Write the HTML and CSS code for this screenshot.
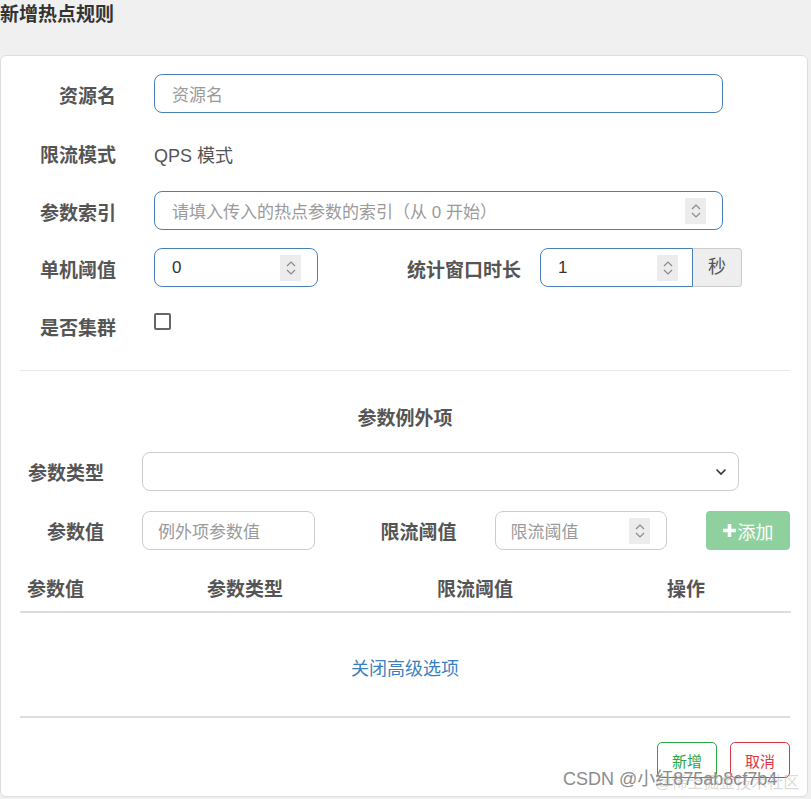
FILE: index.html
```html
<!DOCTYPE html>
<html lang="zh-CN">
<head>
    <meta charset="UTF-8">
    <title>新增热点规则</title>
    <link rel="stylesheet" href="styles.css">
</head>
<body>
    <h4 class="dialog-title">新增热点规则</h4>
    <div class="panel">
        <div class="form-row">
            <label class="control-label">资源名</label>
            <div class="input input-focus wide"><span class="placeholder">资源名</span></div>
        </div>
        <div class="form-row row-static">
            <label class="control-label">限流模式</label>
            <span class="static-text">QPS 模式</span>
        </div>
        <div class="form-row">
            <label class="control-label">参数索引</label>
            <div class="input input-focus wide">
                <span class="placeholder">请填入传入的热点参数的索引（从 0 开始）</span>
                <span class="spinner"><svg width="12" height="20" viewBox="0 0 12 20"><path d="M2 8 L6 4 L10 8 M2 12 L6 16 L10 12" fill="none" stroke="#8a8a8a" stroke-width="1.2"/></svg></span>
            </div>
        </div>
        <div class="form-row">
            <label class="control-label">单机阈值</label>
            <div class="input input-focus threshold">
                <span class="value">0</span>
                <span class="spinner"><svg width="12" height="20" viewBox="0 0 12 20"><path d="M2 8 L6 4 L10 8 M2 12 L6 16 L10 12" fill="none" stroke="#8a8a8a" stroke-width="1.2"/></svg></span>
            </div>
            <label class="control-label window-label">统计窗口时长</label>
            <div class="input-group">
                <div class="input input-focus group-input">
                    <span class="value">1</span>
                    <span class="spinner"><svg width="12" height="20" viewBox="0 0 12 20"><path d="M2 8 L6 4 L10 8 M2 12 L6 16 L10 12" fill="none" stroke="#8a8a8a" stroke-width="1.2"/></svg></span>
                </div>
                <span class="addon">秒</span>
            </div>
        </div>
        <div class="form-row row-check">
            <label class="control-label">是否集群</label>
            <span class="checkbox"></span>
        </div>

        <hr class="divider">

        <h5 class="section-title">参数例外项</h5>

        <div class="form-row small-label">
            <label class="control-label">参数类型</label>
            <div class="input select">
                <span class="value"></span>
                <svg width="12" height="8" viewBox="0 0 12 8"><path d="M1.5 1.5 L6 6 L10.5 1.5" fill="none" stroke="#333" stroke-width="1.6"/></svg>
            </div>
        </div>
        <div class="form-row small-label">
            <label class="control-label">参数值</label>
            <div class="input short"><span class="placeholder">例外项参数值</span></div>
            <label class="control-label limit-label">限流阈值</label>
            <div class="input short">
                <span class="placeholder">限流阈值</span>
                <span class="spinner"><svg width="12" height="20" viewBox="0 0 12 20"><path d="M2 8 L6 4 L10 8 M2 12 L6 16 L10 12" fill="none" stroke="#8a8a8a" stroke-width="1.2"/></svg></span>
            </div>
            <button class="btn-add"><svg width="13" height="13" viewBox="0 0 13 13"><path d="M6.5 0 V13 M0 6.5 H13" stroke="#fff" stroke-width="3.6"/></svg>添加</button>
        </div>

        <table class="items">
            <thead>
                <tr>
                    <th class="col-value">参数值</th>
                    <th class="col-type">参数类型</th>
                    <th class="col-limit">限流阈值</th>
                    <th>操作</th>
                </tr>
            </thead>
        </table>

        <div class="advanced"><a href="#">关闭高级选项</a></div>

        <hr class="divider-bold">

        <div class="footer">
            <button class="btn btn-ok">新增</button>
            <button class="btn btn-cancel">取消</button>
        </div>
    </div>

    <div class="watermark">CSDN @小红875ab8cf7b4</div>
    <div class="watermark watermark-faint">@稀土掘金技术社区</div>
</body>
</html>
```

FILE: styles.css
```css
body {
    margin: 0;
    background-color: #f0f0f0;
    font-family: "Liberation Sans", "Noto Sans CJK SC", sans-serif;
    color: #555;
    position: relative;
    height: 799px;
    overflow: hidden;
}
.dialog-title {
    margin: 0;
    font-size: 19px;
    line-height: 30px;
    font-weight: bold;
    color: #333;
}
.panel {
    margin: 25px 3px 0 0;
    background-color: #fff;
    border: 1px solid #ddd;
    border-radius: 6px;
    padding: 18px 17px 18px 19px;
}
.form-row {
    display: flex;
    align-items: flex-start;
    height: 39px;
    margin-bottom: 18px;
}
.control-label {
    flex: none;
    width: 96px;
    margin-right: 38px;
    padding-top: 10px;
    text-align: right;
    font-size: 19px;
    line-height: 26px;
    font-weight: bold;
    color: #555;
}
.row-static {
    height: 42px;
}
.row-static .control-label {
    padding-top: 12px;
}
.static-text {
    padding-top: 12px;
    font-size: 18px;
    line-height: 26px;
    color: #555;
}
.row-check {
    height: 44px;
    margin-bottom: 21px;
}
.row-check .control-label {
    padding-top: 11px;
}
.checkbox {
    width: 13px;
    height: 13px;
    margin-top: 8px;
    border: 2px solid #666;
    border-radius: 2px;
}
.input {
    box-sizing: border-box;
    display: flex;
    align-items: center;
    height: 39px;
    padding: 0 16px 0 17px;
    border: 1px solid #ccc;
    border-radius: 8px;
    background-color: #fff;
    font-size: 17px;
}
.input-focus {
    border-color: #4a80b8;
}
.placeholder {
    flex: 1;
    color: #9a9a9a;
    white-space: nowrap;
}
.value {
    flex: 1;
    color: #333;
}
.spinner {
    display: flex;
    align-items: center;
    justify-content: center;
    width: 21px;
    height: 26px;
    background-color: #ececec;
}
.wide {
    width: 569px;
}
.threshold {
    width: 164px;
}
.window-label {
    width: 203px;
    margin-right: 19px;
}
.input-group {
    display: flex;
}
.group-input {
    width: 153px;
    border-radius: 8px 0 0 8px;
    padding-right: 14px;
}
.addon {
    box-sizing: border-box;
    width: 49px;
    height: 39px;
    line-height: 37px;
    text-align: center;
    font-size: 18px;
    color: #555;
    background-color: #eee;
    border: 1px solid #ccc;
    border-left: none;
    border-radius: 0 4px 4px 0;
}
.divider {
    margin: 0;
    border: none;
    border-top: 1px solid #e8e8e8;
}
.section-title {
    margin: 35px 0 20px;
    text-align: center;
    font-size: 19px;
    line-height: 26px;
    font-weight: bold;
    color: #555;
}
.small-label {
    margin-bottom: 20px;
}
.small-label .control-label {
    width: 84px;
    padding-top: 9px;
}
.small-label:first-of-type .control-label {
    padding-top: 10px;
}
.small-label .limit-label {
    width: 142px;
}
.select {
    width: 597px;
    padding-right: 11px;
}
.short {
    width: 173px;
    padding-left: 15px;
}
.btn-add {
    display: flex;
    align-items: center;
    justify-content: center;
    gap: 2px;
    width: 84px;
    height: 39px;
    margin-left: 39px;
    padding: 0;
    border: none;
    border-radius: 4px;
    background-color: #8fd19e;
    color: #fff;
    font-family: inherit;
    font-size: 18px;
}
.items {
    width: 771px;
    margin-top: 27px;
    border-collapse: collapse;
}
.items th {
    padding: 0 7px 8px;
    text-align: left;
    font-size: 19px;
    line-height: 26px;
    font-weight: bold;
    color: #555;
    border-bottom: 2px solid #ddd;
}
.col-value {
    width: 166px;
}
.col-type {
    width: 216px;
}
.col-limit {
    width: 216px;
}
.advanced {
    margin-top: 43px;
    text-align: center;
    font-size: 18px;
    line-height: 26px;
}
.advanced a {
    color: #3a7fc1;
    text-decoration: none;
}
.divider-bold {
    margin: 34px 0 0;
    border: none;
    border-top: 2px solid #ddd;
}
.footer {
    display: flex;
    justify-content: flex-end;
    gap: 13px;
    margin-top: 24px;
}
.btn {
    height: 36px;
    padding: 0 14px;
    background-color: #fff;
    border-radius: 5px;
    font-family: inherit;
    font-size: 15px;
}
.btn-ok {
    border: 1px solid #28a745;
    color: #28a745;
}
.btn-cancel {
    border: 1px solid #dc3545;
    color: #dc3545;
}
.watermark {
    position: absolute;
    left: 563px;
    top: 766px;
    font-size: 18px;
    line-height: 26px;
    color: #8c8c8c;
    white-space: nowrap;
}
.watermark-faint {
    left: 655px;
    top: 770px;
    font-size: 16px;
    color: rgba(160, 160, 160, 0.4);
}
```
